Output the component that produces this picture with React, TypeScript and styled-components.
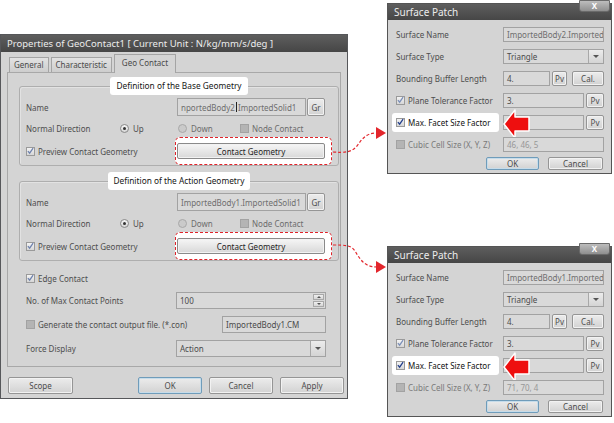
import React from "react";
import styled, { createGlobalStyle } from "styled-components";

const GlobalStyle = createGlobalStyle`
  html, body {
    margin: 0;
    padding: 0;
    background: #fff;
  }
  body {
    font-family: "Noto Sans", "Open Sans", sans-serif;
    font-size: 8px;
    color: #4c4c4c;
  }
  * {
    box-sizing: border-box;
  }
`;

const Page = styled.div`
  position: relative;
  width: 614px;
  height: 423px;
  display: flex;
  align-items: flex-start;
  overflow: hidden;
`;

/* ---------- main dialog ---------- */

const MainDialog = styled.div`
  margin-top: 34px;
  width: 348px;
  height: 365px;
  background: #d4d4d4;
  border: 1px solid #56575a;
  display: flex;
  flex-direction: column;
`;

const TitleBar = styled.div<{ $h: number; $size?: number }>`
  position: relative;
  height: ${(p) => p.$h}px;
  line-height: ${(p) => p.$h}px;
  flex: none;
  background: linear-gradient(#5e5e5e, #464646);
  color: #ececec;
  font-size: ${(p) => p.$size ?? 9.5}px;
  padding-left: 6px;
  white-space: nowrap;
`;

const MainBody = styled.div`
  padding: 2px 6px 0 6px;
  display: flex;
  flex-direction: column;
`;

const Tabs = styled.div`
  display: flex;
  align-items: flex-end;
  height: 18px;
  padding-left: 2px;
  gap: 2px;
`;

const Tab = styled.div<{ $active?: boolean }>`
  position: relative;
  z-index: ${(p) => (p.$active ? 2 : 1)};
  height: ${(p) => (p.$active ? 19 : 15)}px;
  margin-bottom: ${(p) => (p.$active ? -1 : 0)}px;
  padding: ${(p) => (p.$active ? "2px 7px 0" : "1px 4px 0")};
  border: 1px solid #a4a4a4;
  border-bottom: none;
  background: ${(p) =>
    p.$active ? "#d4d4d4" : "linear-gradient(#e2e2e2, #cdcdcd)"};
  color: #4a4a4a;
  white-space: nowrap;
`;

const Panel = styled.div`
  height: 295px;
  border: 1px solid #a8a8a8;
  padding: 4px 6px 0 11px;
`;

const Group = styled.fieldset`
  margin: 0;
  padding: 2px 6px 2px 6px;
  border: 1px solid #aeaeae;
  border-radius: 3px;
  box-shadow: inset 1px 1px 0 #e2e2e2;

  & + & {
    margin-top: 6px;
  }
`;

const Legend = styled.legend`
  margin: 0 auto;
  padding: 0 6px;
  height: 18px;
  line-height: 18px;
  background: #fff;
  border-radius: 3px;
  color: #161616;
  font-size: 8.3px;
`;

const Row = styled.div<{ $h: number; $indent?: number; $mt?: number }>`
  position: relative;
  height: ${(p) => p.$h}px;
  margin-top: ${(p) => p.$mt ?? 0}px;
  padding-left: ${(p) => p.$indent ?? 0}px;
  display: flex;
  align-items: center;
`;

const Label = styled.span<{ $w: number; $tone?: "dim" | "dark" }>`
  width: ${(p) => p.$w}px;
  flex: none;
  display: flex;
  align-items: center;
  white-space: nowrap;
  color: ${(p) =>
    p.$tone === "dim" ? "#7a7a7a" : p.$tone === "dark" ? "#161616" : "#4e4e4e"};
`;

const Option = styled.span<{ $w?: number; $dim?: boolean }>`
  width: ${(p) => (p.$w ? `${p.$w}px` : "auto")};
  flex: none;
  display: flex;
  align-items: center;
  white-space: nowrap;
  color: ${(p) => (p.$dim ? "#6c6c6c" : "#4e4e4e")};
`;

const Field = styled.div<{ $w: number; $h: number; $ml?: number; $tone?: "grey" | "faint" }>`
  position: relative;
  width: ${(p) => p.$w}px;
  height: ${(p) => p.$h}px;
  margin-left: ${(p) => p.$ml ?? 0}px;
  flex: none;
  display: flex;
  align-items: center;
  padding-left: 3px;
  border: 1px solid #a2a2a2;
  background: #d9d9d9;
  color: ${(p) =>
    p.$tone === "faint" ? "#979797" : p.$tone === "grey" ? "#6e6e6e" : "#4a4a4a"};
  white-space: nowrap;
  overflow: hidden;
`;

const Caret = styled.span`
  display: inline-block;
  width: 1px;
  height: 10px;
  background: #222;
  margin: 0 1px;
`;

const Btn = styled.button<{ $w: number; $h: number; $ml?: number; $focus?: boolean }>`
  width: ${(p) => p.$w}px;
  height: ${(p) => p.$h}px;
  margin: 0 0 0 ${(p) => p.$ml ?? 0}px;
  padding: 0;
  flex: none;
  font: inherit;
  color: #4c4c4c;
  border: 1px solid ${(p) => (p.$focus ? "#6f9cba" : "#959595")};
  border-radius: 2px;
  background: linear-gradient(#ececec, #d2d2d2);
  box-shadow: inset 0 0 0 1px ${(p) => (p.$focus ? "#c6dcea" : "#f2f2f2")};
`;

const GeometryButton = styled(Btn)`
  color: #1e1e1e;
  background: linear-gradient(#f6f6f6, #d8d8d8);
  border-color: #8a8a8a;
`;

const Spotlight = styled.div`
  margin-left: -2px;
  padding: 5px 6px 5px 1px;
  border: 1px dashed #e0232a;
  border-radius: 5px;
  background: #fff;
  display: flex;
`;

const SpinBox = styled.div`
  position: absolute;
  right: 1px;
  top: 1px;
  bottom: 1px;
  width: 11px;
  display: flex;
  flex-direction: column;
  gap: 1px;
`;

const SpinHalf = styled.span<{ $down?: boolean }>`
  flex: 1;
  border: 1px solid #a8a8a8;
  background: linear-gradient(#f0f0f0, #d4d4d4);
  display: flex;
  align-items: center;
  justify-content: center;

  &::after {
    content: "";
    border-left: 2px solid transparent;
    border-right: 2px solid transparent;
    ${(p) =>
      p.$down ? "border-top: 2px solid #555;" : "border-bottom: 2px solid #555;"}
  }
`;

const DropArrow = styled.span`
  position: absolute;
  right: 0;
  top: 0;
  bottom: 0;
  width: 15px;
  border-left: 1px solid #a8a8a8;
  background: linear-gradient(#ececec, #d4d4d4);
  display: flex;
  align-items: center;
  justify-content: center;

  &::after {
    content: "";
    border-left: 3px solid transparent;
    border-right: 3px solid transparent;
    border-top: 3px solid #555;
  }
`;

const ButtonBar = styled.div`
  margin-top: 10px;
  padding-left: 1px;
  margin-right: -3px;
  display: flex;
  align-items: center;
  gap: 7px;
`;

const Spacer = styled.div`
  flex: 1;
`;

/* ---------- check box / radio ---------- */

const Box = styled.span<{ $state: "on" | "off" }>`
  width: 9px;
  height: 9px;
  flex: none;
  margin-right: 3px;
  display: inline-flex;
  align-items: center;
  justify-content: center;
  border: 1px solid ${(p) => (p.$state === "on" ? "#9a9a9a" : "#a2a2a2")};
  background: ${(p) =>
    p.$state === "on" ? "linear-gradient(#f4f4f4, #d6d6d6)" : "#b4b4b4"};
`;

const Check = ({ on, color = "#4a5f96" }: { on?: boolean; color?: string }) => (
  <Box $state={on ? "on" : "off"}>
    {on && (
      <svg width="8" height="8" viewBox="0 0 8 8">
        <path d="M1 4.2 L3 6.4 L7 0.8" fill="none" stroke={color} strokeWidth="1.5" />
      </svg>
    )}
  </Box>
);

const RadioRing = styled.span<{ $dim?: boolean }>`
  width: 9px;
  height: 9px;
  flex: none;
  margin-right: 4px;
  border-radius: 50%;
  border: 1px solid ${(p) => (p.$dim ? "#a8a8a8" : "#8a8a8a")};
  background: ${(p) => (p.$dim ? "#cacaca" : "linear-gradient(#f6f6f6, #d6d6d6)")};
  display: inline-flex;
  align-items: center;
  justify-content: center;
`;

const RadioDot = styled.span`
  width: 3px;
  height: 3px;
  border-radius: 50%;
  background: #333;
`;

/* ---------- surface patch dialog ---------- */

const RightColumn = styled.div`
  margin-left: 39px;
  display: flex;
  flex-direction: column;
`;

const PatchDialog = styled.div<{ $mt: number }>`
  position: relative;
  margin-top: ${(p) => p.$mt}px;
  width: 225px;
  height: 171px;
  border: 1px solid #555;
  background: #d4d4d4;
`;

const CloseButton = styled.div`
  position: absolute;
  top: -4px;
  right: 1px;
  width: 31px;
  height: 12px;
  border: 1px solid #6a6a6a;
  border-radius: 0 0 3px 3px;
  background: linear-gradient(#bdbdbd, #8f8f8f);
  color: #fff;
  font-size: 8px;
  font-weight: bold;
  line-height: 10px;
  text-align: center;
`;

const PatchBody = styled.div`
  padding: 3px 7px 0 8px;
`;

const PatchButtons = styled.div`
  margin-top: 2px;
  display: flex;
  justify-content: flex-end;
  gap: 9px;
  padding-right: 1px;
`;

const Highlight = styled.div`
  width: 107px;
  height: 19px;
  margin-left: -4px;
  margin-right: 4px;
  padding-left: 4px;
  flex: none;
  display: flex;
  align-items: center;
  background: #fff;
  border-radius: 3px;
  color: #111;
  white-space: nowrap;
`;

const ArrowMark = styled.svg`
  position: absolute;
  left: 107px;
  top: -3px;
`;

const Overlay = styled.svg`
  position: absolute;
  left: 0;
  top: 0;
  pointer-events: none;
`;

type PatchProps = { name: string; cells: string; mt: number };

function SurfacePatch({ name, cells, mt }: PatchProps) {
  return (
    <PatchDialog $mt={mt}>
      <TitleBar $h={16} $size={10}>Surface Patch</TitleBar>
      <CloseButton>X</CloseButton>
      <PatchBody>
        <Row $h={22}>
          <Label $w={107}>Surface Name</Label>
          <Field $w={101} $h={15} $tone="grey">{name}</Field>
        </Row>
        <Row $h={22}>
          <Label $w={107}>Surface Type</Label>
          <Field $w={101} $h={15}>
            Triangle
            <DropArrow />
          </Field>
        </Row>
        <Row $h={22}>
          <Label $w={107}>Bounding Buffer Length</Label>
          <Field $w={47} $h={15}>4.</Field>
          <Btn $w={15} $h={15} $ml={2}>Pv</Btn>
          <Btn $w={32} $h={15} $ml={5}>Cal.</Btn>
        </Row>
        <Row $h={22}>
          <Label $w={107}>
            <Check on color="#7b8fb8" />
            Plane Tolerance Factor
          </Label>
          <Field $w={81} $h={15}>3.</Field>
          <Btn $w={18} $h={15} $ml={2}>Pv</Btn>
        </Row>
        <Row $h={22}>
          <Highlight>
            <Check on color="#233f8c" />
            Max. Facet Size Factor
          </Highlight>
          <Field $w={81} $h={15} />
          <Btn $w={18} $h={15} $ml={2}>Pv</Btn>
          <ArrowMark width="28" height="32" viewBox="0 0 28 32">
            <path
              d="M1 16 L12 2 L12 9 L26 9 L26 23 L12 23 L12 30 Z"
              fill="#ee0f0f"
              stroke="#fff"
              strokeWidth="1.5"
              strokeLinejoin="round"
            />
          </ArrowMark>
        </Row>
        <Row $h={22}>
          <Label $w={107} $tone="dim">
            <Check />
            Cubic Cell Size (X, Y, Z)
          </Label>
          <Field $w={101} $h={15} $tone="faint">{cells}</Field>
        </Row>
        <PatchButtons>
          <Btn $w={53} $h={13} $focus>OK</Btn>
          <Btn $w={55} $h={13}>Cancel</Btn>
        </PatchButtons>
      </PatchBody>
    </PatchDialog>
  );
}

type GroupProps = { title: string; name: React.ReactNode };

function GeometryGroup({ title, name }: GroupProps) {
  return (
    <Group>
      <Legend>{title}</Legend>
      <Row $h={20}>
        <Label $w={151}>Name</Label>
        <Field $w={129} $h={18} $tone="grey">{name}</Field>
        <Btn $w={18} $h={18} $ml={1}>Gr</Btn>
      </Row>
      <Row $h={22}>
        <Label $w={94}>Normal Direction</Label>
        <Option $w={58}>
          <RadioRing>
            <RadioDot />
          </RadioRing>
          Up
        </Option>
        <Option $w={62} $dim>
          <RadioRing $dim />
          Down
        </Option>
        <Option $dim>
          <Check />
          Node Contact
        </Option>
      </Row>
      <Row $h={24}>
        <Label $w={151}>
          <Check on color="#6f82ad" />
          Preview Contact Geometry
        </Label>
        <Spotlight>
          <GeometryButton $w={148} $h={16}>Contact Geometry</GeometryButton>
        </Spotlight>
      </Row>
    </Group>
  );
}

export default function App() {
  return (
    <>
      <GlobalStyle />
      <Page>
        <MainDialog>
          <TitleBar $h={17}>Properties of GeoContact1 [ Current Unit : N/kg/mm/s/deg ]</TitleBar>
          <MainBody>
            <Tabs>
              <Tab>General</Tab>
              <Tab>Characteristic</Tab>
              <Tab $active>Geo Contact</Tab>
            </Tabs>
            <Panel>
              <GeometryGroup
                title="Definition of the Base Geometry"
                name={
                  <>
                    nportedBody2
                    <Caret />
                    ImportedSolid1
                  </>
                }
              />
              <GeometryGroup
                title="Definition of the Action Geometry"
                name="ImportedBody1.ImportedSolid1"
              />
              <Row $h={20} $indent={7} $mt={7}>
                <Label $w={150}>
                  <Check on color="#6f82ad" />
                  Edge Contact
                </Label>
              </Row>
              <Row $h={24} $indent={7}>
                <Label $w={150}>No. of Max Contact Points</Label>
                <Field $w={150} $h={17}>
                  100
                  <SpinBox>
                    <SpinHalf />
                    <SpinHalf $down />
                  </SpinBox>
                </Field>
              </Row>
              <Row $h={24} $indent={7}>
                <Label $w={196}>
                  <Check />
                  Generate the contact output file. (*.con)
                </Label>
                <Field $w={104} $h={17}>ImportedBody1.CM</Field>
              </Row>
              <Row $h={24} $indent={7}>
                <Label $w={150}>Force Display</Label>
                <Field $w={150} $h={17}>
                  Action
                  <DropArrow />
                </Field>
              </Row>
            </Panel>
            <ButtonBar>
              <Btn $w={65} $h={17}>Scope</Btn>
              <Spacer />
              <Btn $w={64} $h={17} $focus>OK</Btn>
              <Btn $w={64} $h={17}>Cancel</Btn>
              <Btn $w={64} $h={17}>Apply</Btn>
            </ButtonBar>
          </MainBody>
        </MainDialog>
        <RightColumn>
          <SurfacePatch name="ImportedBody2.Imported" cells="46, 46, 5" mt={3} />
          <SurfacePatch name="ImportedBody1.Imported" cells="71, 70, 4" mt={72} />
        </RightColumn>
        <Overlay width="614" height="423" viewBox="0 0 614 423">
          <g fill="none" stroke="#e3262c" strokeWidth="1.2" strokeDasharray="3 2">
            <path d="M333 152 C345 153 352 152 357 146 C362 139 366 133 377 133" />
            <path d="M333 245 C345 245 351 245 355 251 C360 259 364 267 377 267" />
          </g>
          <g fill="#e3262c">
            <polygon points="376,127 386,133 376,139" />
            <polygon points="376,261 386,267 376,273" />
          </g>
        </Overlay>
      </Page>
    </>
  );
}
